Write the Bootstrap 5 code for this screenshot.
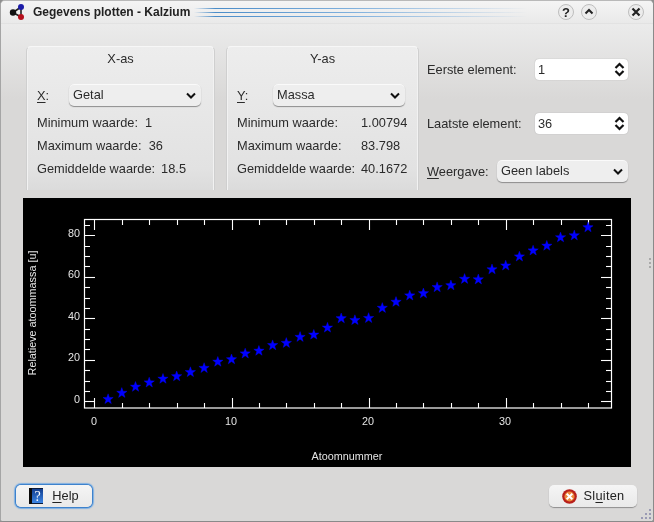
<!DOCTYPE html>
<html lang="nl">
<head>
<meta charset="utf-8">
<title>Gegevens plotten - Kalzium</title>
<link rel="stylesheet" href="https://cdn.jsdelivr.net/npm/bootstrap@5.3.0/dist/css/bootstrap.min.css">
<style>
html,body{margin:0;height:522px;width:654px;overflow:hidden;background:#8f8f8f;}
body{font-family:"Liberation Sans",Arial,sans-serif;font-size:12.8px;line-height:15px;color:#2b2b2b;}
.kwin{width:654px;height:522px;background:#d9d8d7;border:1px solid #8a8a8a;border-left-color:#a5a5a5;border-top-color:#b9b9b9;border-radius:5px 5px 3px 3px;box-shadow:inset 1px 0 0 #f4f4f4,inset -1px 0 0 #f4f4f4;overflow:hidden;will-change:transform;}
.kbar{height:23px;padding-left:7px;background:linear-gradient(#f4f4f4,#e9e9e9);font-weight:700;font-size:12px;color:#222;border-bottom:1px solid #e2e2e2;}
.kttl{margin-left:7px;white-space:nowrap;}
.klines{height:9px;flex:1;margin:0 12px 0 4px;background:linear-gradient(to right,#fff0,#4a8cc8 6%,#7fb0dd 45%,#e9e9e900 95%);
-webkit-mask:repeating-linear-gradient(#000 0 1px,#0000 1px 4px);mask:repeating-linear-gradient(#000 0 1px,#0000 1px 4px);}
.kbtn{width:18px;height:18px;margin-right:5px;flex:none;}
.kbtn.klast{margin-right:8px;}
.kbody{height:497px;padding:22px 22px 0 22px;background:linear-gradient(#ebebeb,#d9d8d7 75px,#d9d8d7);}
.gbox{width:189px;height:144px;margin-left:3px;padding:4px 10px 0;border:1px solid #cfcfcf;border-top-color:#f7f7f7;border-bottom:0;border-radius:5px 5px 0 0;background:linear-gradient(#ededed,#e2e2e2 85%,#dbdbdb);box-shadow:-1px 0 0 #f2f2f2 inset,1px 0 0 #f2f2f2 inset;}
.gbox.gy{width:193px;margin-left:11px;}
.gttl{text-align:center;height:33px;line-height:15px;}
.grow{height:23px;line-height:23px;white-space:nowrap;}
.gval{width:47px;flex:none;}
.gavg{margin-left:6px;}
.comborow{height:22px;margin-bottom:5px;padding-right:3px;}
.kcombo.form-select{height:22px;padding:0 20px 0 4px;border:0;border-radius:5px;font-size:12.8px;line-height:20px;color:#2b2b2b;background-color:#eee;background-image:url("data:image/svg+xml,%3Csvg xmlns='http://www.w3.org/2000/svg' viewBox='0 0 10 7'%3E%3Cpath d='M1 1.5l4 4 4-4' fill='none' stroke='%23111' stroke-width='2'/%3E%3C/svg%3E");background-size:10px 7px;background-position:right 5px center;box-shadow:0 1px 1px #8d8d8d,inset 0 1px 0 #fafafa;}
.xl{width:32px;flex:none;}
.yl{width:36px;flex:none;}
.side{width:201px;margin-left:8px;}
.siderow{height:22px;}
.siderow.r1{margin-top:12px;}
.siderow.r2{margin-top:32px;}
.siderow.r3{margin-top:26px;}
.sl{flex:1;white-space:nowrap;}
.wl{width:70px;flex:none;}
.kspin{width:93px;height:21px;background:#fff;border-radius:4px;padding:0 3px;box-shadow:0 0 1px #999;}
.kspin .form-control{border:0;padding:0;background:transparent;font-size:12.8px;color:#2b2b2b;box-shadow:none;height:21px;border-radius:0;}
.kspin svg{flex:none;}
.plot{display:block;width:608px;height:269px;margin:8px 0 0 0;background:#000;}
.plot text{font-family:"Liberation Sans",Arial,sans-serif;font-size:10.8px;fill:#e4e4e4;}
.foot{margin-top:18px;margin-right:-6px;}
.kb.btn{height:22px;padding:0;font-size:12.8px;line-height:20px;color:#222;background:linear-gradient(#f5f5f5,#e9e9e9);border:0;border-radius:5px;box-shadow:0 1px 1px #8d8d8d;}
.kb.khelp{width:76px;margin-left:-7px;box-shadow:0 0 0 1px #3e82cc,0 0 1px 2px #7fb0e2;}
.kb.kclose{width:88px;letter-spacing:.25px;gap:7px;}
.kb svg{flex:none;}
.kgrip{position:absolute;}
.kg1{right:1px;top:257px;}
.kg2{right:1px;bottom:1px;}
u{text-underline-offset:2px;}
</style>
</head>
<body>
<div class="kwin d-flex flex-column position-relative">
  <div class="kbar d-flex align-items-center">
    <svg width="18" height="18" viewBox="0 0 18 18"><path d="M5 9.5L13 4M5 9.5L13 14M13 4V14" stroke="#222" stroke-width="1.6"/><circle cx="5" cy="9.5" r="3.2" fill="#111"/><circle cx="13" cy="4" r="3" fill="#1c1ca8"/><circle cx="13" cy="14" r="3" fill="#b5101c"/></svg>
    <span class="kttl">Gegevens plotten - Kalzium</span>
    <div class="klines"></div>
    <svg class="kbtn" viewBox="0 0 18 18"><circle cx="9" cy="9" r="7.5" fill="#ececec" stroke="#bdbdbd"/><text x="9" y="13.500" text-anchor="middle" font-family="Liberation Sans" font-weight="700" font-size="13" fill="#222">?</text></svg>
    <svg class="kbtn" viewBox="0 0 18 18"><circle cx="9" cy="9" r="7.5" fill="#ececec" stroke="#bdbdbd"/><path d="M5.500 10.500L9 7l3.500 3.500" fill="none" stroke="#222" stroke-width="2"/></svg>
    <svg class="kbtn klast ms-4" viewBox="0 0 18 18"><circle cx="9" cy="9" r="7.500" fill="#ececec" stroke="#bdbdbd"/><path d="M5.500 5.500l7 7m0-7l-7 7" fill="none" stroke="#222" stroke-width="2.200"/></svg>
  </div>
  <div class="kbody">
    <div class="d-flex">
      <div class="gbox">
        <div class="gttl">X-as</div>
        <div class="comborow d-flex align-items-center"><span class="xl"><u>X</u>:</span><select class="form-select kcombo" aria-label="X"><option>Getal</option></select></div>
        <div class="grow">Minimum waarde:&nbsp; 1</div>
        <div class="grow">Maximum waarde:&nbsp; 36</div>
        <div class="grow">Gemiddelde waarde:<span class="gavg">18.5</span></div>
      </div>
      <div class="gbox gy">
        <div class="gttl">Y-as</div>
        <div class="comborow d-flex align-items-center"><span class="yl"><u>Y</u>:</span><select class="form-select kcombo" aria-label="Y"><option>Massa</option></select></div>
        <div class="grow d-flex justify-content-between"><span>Minimum waarde:</span><span class="gval">1.00794</span></div>
        <div class="grow d-flex justify-content-between"><span>Maximum waarde:</span><span class="gval">83.798</span></div>
        <div class="grow d-flex justify-content-between"><span>Gemiddelde waarde:</span><span class="gval">40.1672</span></div>
      </div>
      <div class="side">
        <div class="siderow r1 d-flex align-items-center"><span class="sl">Eerste element:</span><div class="kspin d-flex align-items-center"><input class="form-control" value="1" aria-label="Eerste element"><svg width="11" height="15" viewBox="0 0 11 15"><path d="M1.500 6L5.500 2l4 4M1.500 9l4 4 4-4" fill="none" stroke="#111" stroke-width="2.200"/></svg></div></div>
        <div class="siderow r2 d-flex align-items-center"><span class="sl">Laatste element:</span><div class="kspin d-flex align-items-center"><input class="form-control" value="36" aria-label="Laatste element"><svg width="11" height="15" viewBox="0 0 11 15"><path d="M1.500 6L5.500 2l4 4M1.500 9l4 4 4-4" fill="none" stroke="#111" stroke-width="2.200"/></svg></div></div>
        <div class="siderow r3 d-flex align-items-center"><span class="wl"><u>W</u>eergave:</span><select class="form-select kcombo" aria-label="Weergave"><option>Geen labels</option></select></div>
      </div>
    </div>
    <svg class="plot" id="plot" width="608" height="269" viewBox="23 198 608 269">
      <rect x="84.500" y="219.500" width="527" height="188.500" fill="none" stroke="#fff" stroke-width="1.200"/>
      <g id="ticks" stroke="#fff" stroke-width="1.100"></g>
      <g id="stars" fill="#0000ff" stroke="#0000ff" stroke-width=".4"></g>
      <g text-anchor="end">
        <text x="80" y="237">80</text><text x="80" y="278">60</text><text x="80" y="320">40</text><text x="80" y="361">20</text><text x="80" y="403">0</text>
      </g>
      <g text-anchor="middle">
        <text x="94" y="425">0</text><text x="231" y="425">10</text><text x="368" y="425">20</text><text x="505" y="425">30</text>
        <text x="347" y="460">Atoomnummer</text>
        <text transform="translate(36 313) rotate(-90)">Relatieve atoommassa [u]</text>
      </g>
    </svg>
    <div class="foot d-flex justify-content-between">
      <button class="btn kb khelp d-flex align-items-center justify-content-center gap-2" type="button">
        <svg width="15" height="16" viewBox="0 0 15 16"><defs><linearGradient id="bk" x1="0" y1="0" x2="0" y2="1"><stop offset="0" stop-color="#123d8f"/><stop offset="1" stop-color="#3b86e6"/></linearGradient></defs><rect width="14" height="16" fill="#0a1c3d"/><rect width="3" height="16" fill="#0b0b0b"/><rect x="3" y="1" width="11" height="14" fill="url(#bk)"/><text x="8.500" y="13" text-anchor="middle" font-family="Liberation Serif" font-size="14" fill="#fff">?</text></svg>
        <span><u>H</u>elp</span>
      </button>
      <button class="btn kb kclose d-flex align-items-center justify-content-center" type="button">
        <svg width="15" height="15" viewBox="0 0 16 16"><circle cx="8" cy="8" r="7.800" fill="#b81f1a"/><circle cx="8" cy="8" r="5.400" fill="#ec8a3e"/><path d="M5 5l6 6m0-6l-6 6" stroke="#fff" stroke-width="2.100"/></svg>
        <span>Sl<u>u</u>iten</span>
      </button>
    </div>
  </div>
  <svg class="kgrip kg1" width="3" height="11" viewBox="0 0 3 11" aria-hidden="true"><rect x="0" y="0" width="2" height="2" fill="#a9a9a9"/><rect x="0" y="4" width="2" height="2" fill="#a9a9a9"/><rect x="0" y="8" width="2" height="2" fill="#a9a9a9"/></svg>
  <svg class="kgrip kg2" width="11" height="11" viewBox="0 0 11 11" aria-hidden="true"><g fill="#9a9ab4"><rect x="8" y="0" width="2" height="2"/><rect x="4" y="4" width="2" height="2"/><rect x="8" y="4" width="2" height="2"/><rect x="0" y="8" width="2" height="2"/><rect x="4" y="8" width="2" height="2"/><rect x="8" y="8" width="2" height="2"/></g></svg>
</div>
<script>
var NS="http://www.w3.org/2000/svg",masses=[1.00794,4.0026,6.941,9.012,10.811,12.011,14.007,15.999,18.998,20.18,22.99,24.305,26.98,28.086,30.97,32.06,35.45,39.948,39.098,40.078,44.956,47.867,50.94,51.996,54.938,55.845,58.933,58.693,63.546,65.38,69.723,72.63,74.92,78.96,79.9,83.798];
function X(v){return 94.4+13.71*v}function Y(v){return 401.3-2.075*v}
var t=document.getElementById("ticks"),s=document.getElementById("stars");
function ln(a,b,c,d){var l=document.createElementNS(NS,"line");l.setAttribute("x1",a);l.setAttribute("y1",b);l.setAttribute("x2",c);l.setAttribute("y2",d);t.appendChild(l)}
for(var i=0;i<=38;i+=2){var x=Math.round(X(i))+.5,n=i%10==0?10:5;if(x<612){ln(x,220,x,220+n);ln(x,408,x,408-n)}}
[0,5,10,15,20,25,30,35,40,45,50,55,60,65,70,75,80,85].forEach(function(v){var y=Math.round(Y(v))+.5,n=v%20==0?10:5;ln(85,y,85+n,y);ln(611,y,611-n,y)});
masses.forEach(function(m,i){var cx=X(i+1),cy=Y(m),p=[];for(var a=0;a<10;a++){var r=a%2?2.2:5.4,th=-Math.PI/2+a*Math.PI/5;p.push((cx+r*Math.cos(th)).toFixed(1)+","+(cy+r*Math.sin(th)).toFixed(1))}var e=document.createElementNS(NS,"polygon");e.setAttribute("points",p.join(" "));s.appendChild(e)});
</script>
</body>
</html>
